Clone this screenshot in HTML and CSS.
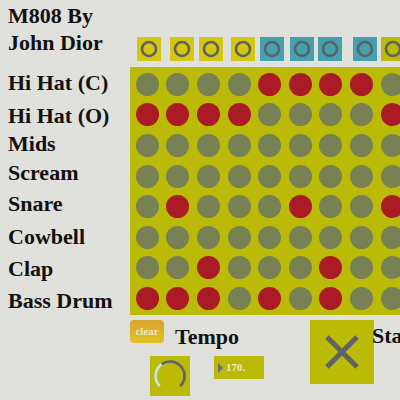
FILE: index.html
```html
<!DOCTYPE html>
<html>
<head>
<meta charset="utf-8">
<link rel="stylesheet" href="styles.css">
</head>
<body>
<div class="app">
  <h1 class="title">M808 By<br>John Dior</h1>
  <div class="steps">
    <span class="step step-y"><svg viewBox="0 0 24 24"><circle cx="12" cy="12" r="7"/></svg></span>
    <span class="step step-y"><svg viewBox="0 0 24 24"><circle cx="12" cy="12" r="7"/></svg></span>
    <span class="step step-y"><svg viewBox="0 0 24 24"><circle cx="12" cy="12" r="7"/></svg></span>
    <span class="step step-y"><svg viewBox="0 0 24 24"><circle cx="12" cy="12" r="7"/></svg></span>
    <span class="step step-t"><svg viewBox="0 0 24 24"><circle cx="12" cy="12" r="7"/></svg></span>
    <span class="step step-t"><svg viewBox="0 0 24 24"><circle cx="12" cy="12" r="7"/></svg></span>
    <span class="step step-t"><svg viewBox="0 0 24 24"><circle cx="12" cy="12" r="7"/></svg></span>
    <span class="step step-t"><svg viewBox="0 0 24 24"><circle cx="12" cy="12" r="7"/></svg></span>
    <span class="step step-o"><svg viewBox="0 0 24 24"><circle cx="12" cy="12" r="7"/></svg></span>
  </div>
  <ul class="labels">
    <li>Hi Hat (C)</li>
    <li>Hi Hat (O)</li>
    <li>Mids</li>
    <li>Scream</li>
    <li>Snare</li>
    <li>Cowbell</li>
    <li>Clap</li>
    <li>Bass Drum</li>
  </ul>
  <div class="matrix">
    <span class="dot"></span><span class="dot"></span><span class="dot"></span><span class="dot"></span><span class="dot on"></span><span class="dot on"></span><span class="dot on"></span><span class="dot on"></span><span class="dot"></span>
    <span class="dot on"></span><span class="dot on"></span><span class="dot on"></span><span class="dot on"></span><span class="dot"></span><span class="dot"></span><span class="dot"></span><span class="dot"></span><span class="dot on"></span>
    <span class="dot"></span><span class="dot"></span><span class="dot"></span><span class="dot"></span><span class="dot"></span><span class="dot"></span><span class="dot"></span><span class="dot"></span><span class="dot"></span>
    <span class="dot"></span><span class="dot"></span><span class="dot"></span><span class="dot"></span><span class="dot"></span><span class="dot"></span><span class="dot"></span><span class="dot"></span><span class="dot"></span>
    <span class="dot"></span><span class="dot on"></span><span class="dot"></span><span class="dot"></span><span class="dot"></span><span class="dot on"></span><span class="dot"></span><span class="dot"></span><span class="dot on"></span>
    <span class="dot"></span><span class="dot"></span><span class="dot"></span><span class="dot"></span><span class="dot"></span><span class="dot"></span><span class="dot"></span><span class="dot"></span><span class="dot"></span>
    <span class="dot"></span><span class="dot"></span><span class="dot on"></span><span class="dot"></span><span class="dot"></span><span class="dot"></span><span class="dot on"></span><span class="dot"></span><span class="dot"></span>
    <span class="dot on"></span><span class="dot on"></span><span class="dot on"></span><span class="dot"></span><span class="dot on"></span><span class="dot"></span><span class="dot on"></span><span class="dot"></span><span class="dot"></span>
  </div>
  <div class="controls">
    <div class="tempo">
      <div class="tempo-top">
        <button class="clear">clear</button>
        <span class="tempo-label">Tempo</span>
      </div>
      <div class="tempo-bottom">
        <div class="knob">
          <svg viewBox="0 0 40 40" width="40" height="40">
            <path class="arc-lit" d="M9.75 30.25 A14.5 14.5 0 0 1 11.68 8.12"/>
            <path class="arc-off" d="M11.68 8.12 A14.5 14.5 0 0 1 30.25 30.25"/>
          </svg>
        </div>
        <div class="numbox"><span class="tri"></span><span class="num">170.</span></div>
      </div>
    </div>
    <button class="stop"><svg viewBox="0 0 64 64" width="64" height="64"><path d="M17 17 L47 47 M47 17 L17 47"/></svg></button>
    <span class="start-label">Start</span>
  </div>
</div>
</body>
</html>
```

FILE: styles.css
```css
html, body {
  margin: 0;
  padding: 0;
  overflow: hidden;
  background: #e0e0dc;
}

.app {
  display: grid;
  grid-template-columns: 130px 270px;
  grid-template-rows: 67px 248px auto;
  font-family: "Liberation Serif", serif;
  font-weight: bold;
  color: #111;
  width: 400px;
  height: 400px;
}

.title {
  margin: 0;
  padding: 2px 0 0 8px;
  font-size: 22px;
  line-height: 27.3px;
  font-weight: bold;
  white-space: nowrap;
}

.steps {
  display: flex;
  align-self: end;
  padding: 0 0 6px 7px;
}

.step {
  width: 24px;
  height: 24px;
  flex: none;
  display: block;
}
.step svg { display: block; width: 24px; height: 24px; }
.step circle { fill: none; stroke: #5d6067; stroke-width: 2.6; }
.step-y { background: #d3c70f; }
.step-t { background: #44a1ad; }
.step-o { background: #bbba06; }

.step:nth-child(2) { margin-left: 9px; }
.step:nth-child(3) { margin-left: 5px; }
.step:nth-child(4) { margin-left: 8px; }
.step:nth-child(5) { margin-left: 5px; }
.step:nth-child(6) { margin-left: 6px; }
.step:nth-child(7) { margin-left: 4px; }
.step:nth-child(8) { margin-left: 11px; }
.step:nth-child(9) { margin-left: 4px; }

.labels {
  list-style: none;
  margin: 0;
  padding: 0 0 0 8px;
  font-size: 22px;
}
.labels li {
  height: 22px;
  line-height: 22px;
  white-space: nowrap;
}
.labels li:nth-child(1) { margin-top: 4.6px; }
.labels li:nth-child(2) { margin-top: 11.3px; }
.labels li:nth-child(3) { margin-top: 6.4px; }
.labels li:nth-child(4) { margin-top: 6.3px; }
.labels li:nth-child(5) { margin-top: 9.7px; }
.labels li:nth-child(6) { margin-top: 10.3px; }
.labels li:nth-child(7) { margin-top: 10.7px; }
.labels li:nth-child(8) { margin-top: 9.6px; }

.matrix {
  display: grid;
  grid-template-columns: repeat(9, 30.6px);
  grid-auto-rows: 30.6px;
  padding: 2px 0 0 2px;
  box-sizing: border-box;
  width: 290px;
  height: 248px;
  background: #bbba06;
}
.dot {
  width: 23px;
  height: 23px;
  border-radius: 50%;
  place-self: center;
  background: #778154;
}
.dot.on { background: #aa1b26; }

.controls {
  grid-column: 2;
  display: flex;
  align-items: flex-start;
  padding-top: 5px;
}

.tempo {
  display: flex;
  flex-direction: column;
  width: 134px;
  flex: none;
}
.tempo-top {
  display: flex;
  align-items: flex-start;
  height: 23px;
}
.clear {
  width: 34px;
  height: 23px;
  padding: 0;
  border: none;
  border-radius: 4px;
  background: linear-gradient(#d8a52b, #dcc426);
  color: #efe6c2;
  font-family: "Liberation Serif", serif;
  font-weight: bold;
  font-size: 11px;
  line-height: 23px;
  text-align: center;
  flex: none;
}
.tempo-label {
  margin: 5.6px 0 0 11px;
  font-size: 22px;
  line-height: 22px;
}
.tempo-bottom {
  display: flex;
  align-items: flex-start;
  margin-top: 13px;
}
.knob {
  width: 40px;
  height: 40px;
  margin-left: 20px;
  background: #bbba06;
}
.knob svg { display: block; }
.knob path { fill: none; stroke-width: 2.6; }
.arc-lit { stroke: #cde2e8; }
.arc-off { stroke: #5f6266; }

.numbox {
  width: 50px;
  height: 23px;
  margin-left: 24px;
  background: #bbba06;
  display: flex;
  align-items: center;
}
.tri {
  width: 0;
  height: 0;
  margin-left: 4px;
  border-left: 5px solid #6b6e72;
  border-top: 5.3px solid transparent;
  border-bottom: 5.3px solid transparent;
}
.num {
  margin-left: 3px;
  font-size: 11px;
  line-height: 23px;
  color: #eee8c9;
}

.stop {
  width: 64px;
  height: 64px;
  padding: 0;
  border: none;
  margin-left: 46px;
  background: #bbba06;
  flex: none;
}
.stop svg { display: block; }
.stop path { stroke: #5f6266; stroke-width: 5; fill: none; }

.start-label {
  margin: 5px 0 0 -2px;
  font-size: 22px;
  line-height: 22px;
  white-space: nowrap;
}
```
